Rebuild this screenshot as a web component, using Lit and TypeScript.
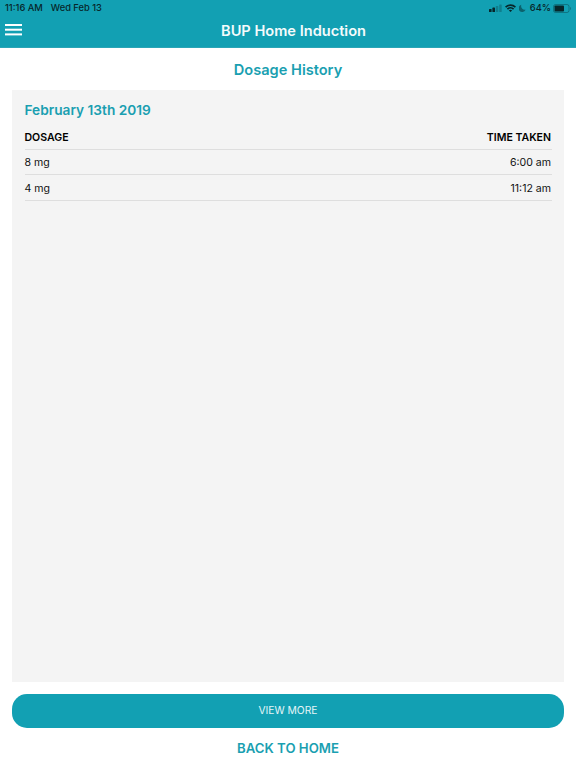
import { LitElement, html, css } from "lit";
import { customElement } from "lit/decorators.js";

interface Dose {
  amount: string;
  time: string;
}

const doses: Dose[] = [
  { amount: "8 mg", time: "6:00 am" },
  { amount: "4 mg", time: "11:12 am" },
];

@customElement("status-bar")
class StatusBar extends LitElement {
  static styles = css`
    :host {
      display: flex;
      align-items: center;
      justify-content: space-between;
      height: 16px;
      padding: 0 5px;
      font-size: 9.3px;
      font-weight: 500;
      line-height: 16px;
      color: #07262a;
    }
    .group {
      display: flex;
      align-items: center;
      white-space: pre;
    }
    .date {
      margin-left: 8px;
    }
    svg {
      display: block;
    }
    .wifi {
      margin-left: 3px;
    }
    .moon {
      margin-left: 3px;
    }
    .percent {
      margin: 0 2px 0 4px;
    }
    .icons {
      margin-right: 0;
    }
  `;

  render() {
    return html`
      <div class="group"><span>11:16 AM</span><span class="date">Wed Feb 13</span></div>
      <div class="group icons">
        <svg width="13" height="8" viewBox="0 0 13 8" fill="#07262a">
          <rect x="0" y="5" width="2.6" height="3" rx=".6" />
          <rect x="3.4" y="3.6" width="2.6" height="4.4" rx=".6" />
          <rect x="6.8" y="2" width="2.5" height="6" rx=".6" opacity=".28" />
          <rect x="10.2" y=".5" width="2.5" height="7.5" rx=".6" opacity=".28" />
        </svg>
        <svg class="wifi" width="11" height="8" viewBox="0 0 11 8" fill="none" stroke="#07262a" stroke-width="1.7">
          <path d="M.6 3.1a7 7 0 0 1 9.8 0M2.4 5.2a4.4 4.4 0 0 1 6.2 0" />
          <path d="M5.5 8 3.9 6.4a2.3 2.3 0 0 1 3.2 0z" fill="#07262a" stroke="none" />
        </svg>
        <svg class="moon" width="7" height="8" viewBox="0 0 7 8" fill="#07262a" opacity=".5">
          <path d="M2.3 .7A3.7 3.7 0 1 0 6.6 5.8 3.9 3.9 0 0 1 2.3 .7z" />
        </svg>
        <span class="percent">64%</span>
        <svg width="18" height="9" viewBox="0 0 18 9">
          <rect x=".5" y=".5" width="15.5" height="8" rx="2" fill="none" stroke="#07262a" opacity=".35" />
          <rect x="1.5" y="1.5" width="9.5" height="6" rx=".8" fill="#07262a" />
          <path d="M17 3v3c.7-.3 1-.8 1-1.5s-.3-1.2-1-1.5z" fill="#07262a" opacity=".35" />
        </svg>
      </div>
    `;
  }
}

@customElement("app-root")
class AppRoot extends LitElement {
  static styles = css`
    :host {
      display: flex;
      flex-direction: column;
      box-sizing: border-box;
      height: 768px;
      background: #fff;
      color: #111;
      font-family: Inter, "Liberation Sans", sans-serif;
    }
    .header {
      box-sizing: border-box;
      height: 48px;
      background: #12a0b3;
      border-bottom: 1px solid #2ba5b6;
    }
    .bar {
      display: grid;
      grid-template-columns: 40px 1fr 29px;
      height: 31px;
    }
    .menu {
      display: block;
      margin: 8px 0 0 5px;
    }
    h1,
    h2,
    h3 {
      margin: 0;
      font-weight: 600;
    }
    h1 {
      color: #f4fbfc;
      font-size: 14.6px;
      line-height: 30px;
      text-align: center;
    }
    h2,
    h3,
    .back {
      color: #1a9fb1;
    }
    h2 {
      font-size: 14.6px;
      line-height: 45px;
      height: 42px;
      text-align: center;
    }
    .panel {
      box-sizing: border-box;
      height: 592px;
      margin: 0 12px;
      padding: 10px 12px 0 12.5px;
      background: #f4f4f4;
    }
    h3 {
      font-size: 13.7px;
      line-height: 20px;
    }
    .row {
      display: flex;
      justify-content: space-between;
      box-sizing: border-box;
      height: 25.5px;
      padding-right: 1px;
      border-bottom: 1px solid #dedede;
      font-size: 10.55px;
      line-height: 26px;
    }
    .row:last-child {
      line-height: 27px;
    }
    .head {
      height: 29.5px;
      padding-top: 5px;
      line-height: 26px;
      font-weight: 600;
      color: #000;
    }
    .more {
      height: 33.5px;
      margin: 12px 12px 0;
      padding: 0;
      border: 0;
      border-radius: 15px;
      background: #12a0b3;
      color: #e4f5f7;
      font: 400 10.3px/33px Inter, "Liberation Sans", sans-serif;
    }
    .back {
      padding: 0;
      border: 0;
      background: none;
      font: 600 13.2px/40px Inter, "Liberation Sans", sans-serif;
    }
  `;

  render() {
    return html`
      <header class="header">
        <status-bar></status-bar>
        <div class="bar">
          <svg class="menu" width="18" height="12" viewBox="0 0 18 12" fill="#fff">
            <rect y="0" width="17" height="2" />
            <rect y="4.7" width="17" height="2" />
            <rect y="9.4" width="17" height="2" />
          </svg>
          <h1>BUP Home Induction</h1>
        </div>
      </header>
      <h2>Dosage History</h2>
      <section class="panel">
        <h3>February 13th 2019</h3>
        <div class="row head"><span>DOSAGE</span><span>TIME TAKEN</span></div>
        ${doses.map((d) => html`<div class="row"><span>${d.amount}</span><span>${d.time}</span></div>`)}
      </section>
      <button class="more">VIEW MORE</button>
      <button class="back">BACK TO HOME</button>
    `;
  }
}
